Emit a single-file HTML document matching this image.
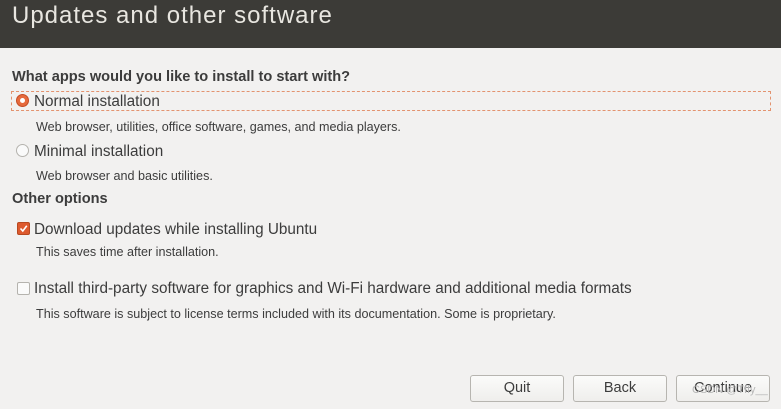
<!DOCTYPE html>
<html><head><style>
body{margin:0;width:781px;height:409px;background:#f2f1f0;font-family:"Liberation Sans",sans-serif;color:#3c3c3c;position:relative;overflow:hidden}
.hd{position:absolute;left:0;top:0;width:781px;height:48px;background:#3c3b37}
.t{position:absolute;white-space:nowrap;line-height:1}
.title{left:12px;top:4px;font-size:24px;color:#e8e6e0;letter-spacing:1px}
.h{font-weight:bold;font-size:14.6px}
.o{font-size:15.3px}
.d{font-size:12.6px}
.rad{position:absolute;width:11px;height:11px;border-radius:50%;border:1px solid #b5b3ae;background:#fafafa}
.rad.on{border-color:#c54d25;background:#e66a3d}
.rad.on::after{content:"";position:absolute;left:3px;top:3px;width:5px;height:5px;border-radius:50%;background:#fff}
.cb{position:absolute;width:11px;height:11px;border-radius:2px;border:1px solid #b5b3ae;background:#fafafa}
.cb.on{background:#dd5a2e;border-color:#b8481f}
.btn{position:absolute;top:375px;width:92px;height:25px;border:1px solid #b7b5b0;border-radius:3px;background:linear-gradient(#fbfbfa,#efeeec);font-size:14.5px;text-align:center;line-height:25px;color:#3c3c3c}
</style></head><body>
<div class="hd"></div>
<div class="t title">Updates and other software</div>
<div class="t h" style="left:12px;top:70px">What apps would you like to install to start with?</div>
<div style="position:absolute;left:11px;top:91px;width:758px;height:18px;border:1px dashed #e3936f"></div>
<div class="rad on" style="left:16px;top:94px"></div>
<div class="t o" style="left:34px;top:94px">Normal installation</div>
<div class="t d" style="left:36px;top:121px">Web browser, utilities, office software, games, and media players.</div>
<div class="rad" style="left:16px;top:144px"></div>
<div class="t o" style="left:34px;top:144px">Minimal installation</div>
<div class="t d" style="left:36px;top:170px">Web browser and basic utilities.</div>
<div class="t h" style="left:12px;top:192px">Other options</div>
<div class="cb on" style="left:17px;top:222px"><svg width="11" height="11" style="position:absolute;left:0;top:0"><path d="M2.5 5.5 L4.8 8 L8.8 2.8" stroke="#fff" stroke-width="1.6" fill="none"/></svg></div>
<div class="t o" style="left:34px;top:222px">Download updates while installing Ubuntu</div>
<div class="t d" style="left:36px;top:246px">This saves time after installation.</div>
<div class="cb" style="left:17px;top:282px"></div>
<div class="t o" style="left:34px;top:281px">Install third-party software for graphics and Wi-Fi hardware and additional media formats</div>
<div class="t d" style="left:36px;top:308px">This software is subject to license terms included with its documentation. Some is proprietary.</div>
<div class="btn" style="left:470px">Quit</div>
<div class="btn" style="left:573px">Back</div>
<div class="btn" style="left:676px">Continue</div>
<div class="t" style="left:692px;top:385px;font-size:11px;color:#b8b8b8">CSDN @Tffy__</div>
</body></html>
